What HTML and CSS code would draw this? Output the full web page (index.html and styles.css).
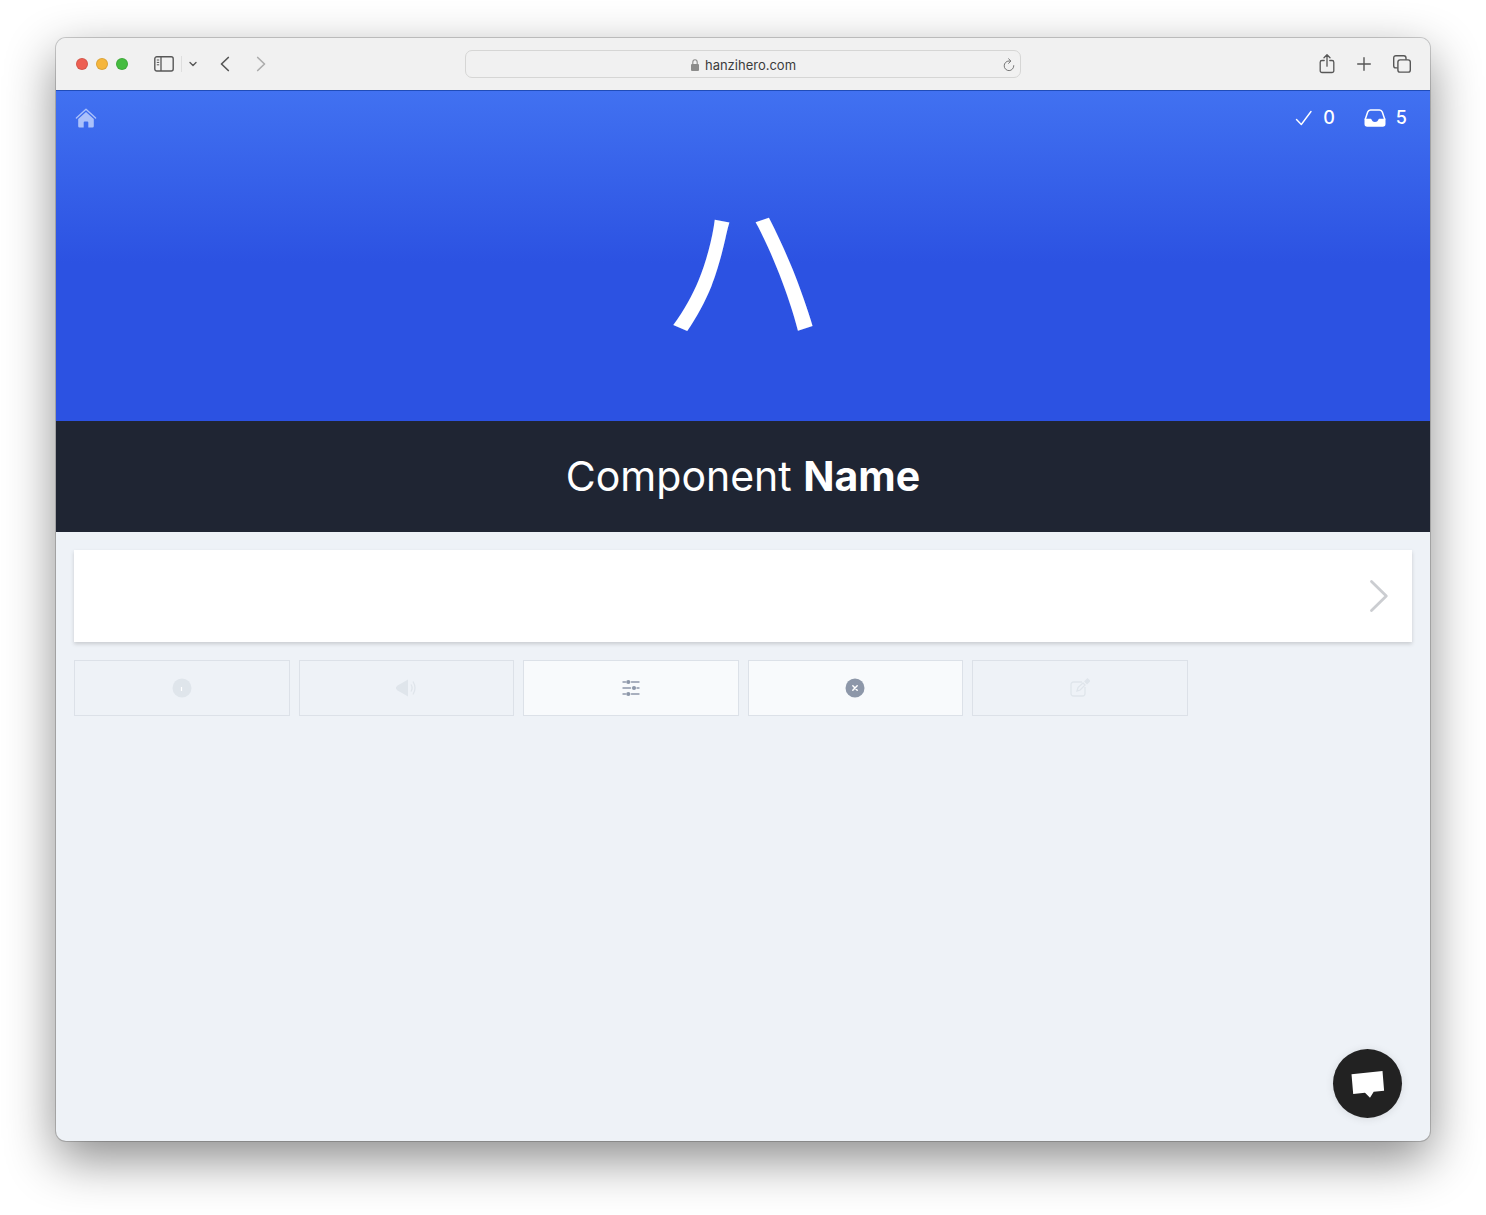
FILE: index.html
```html
<!DOCTYPE html>
<html lang="en">

<head>
    <meta charset="UTF-8">
    <meta name="viewport" content="width=device-width, initial-scale=1.0">
    <title>HanziHero</title>
    <link rel="stylesheet" href="styles.css">
</head>

<body>
    <div class="window">
        <div class="toolbar">
            <div class="toolbar-left">
                <div class="lights">
                    <span class="light red"></span>
                    <span class="light yellow"></span>
                    <span class="light green"></span>
                </div>
                <button class="tool sidebar" type="button" aria-label="Sidebar">
                    <svg width="20" height="16" viewBox="0 0 20 16" fill="none" stroke="currentColor">
                        <rect x="0.8" y="0.8" width="18.4" height="14.2" rx="2" stroke-width="1.4" />
                        <path d="M7 1v14" stroke-width="1.3" />
                        <path d="M2.8 4h2.4M2.8 6.4h2.4M2.8 8.8h2.4" />
                    </svg>
                </button>
                <button class="tool menu" type="button" aria-label="Tab groups">
                    <svg width="8" height="6" viewBox="0 0 8 6" fill="none" stroke="currentColor" stroke-width="1.4" stroke-linecap="round" stroke-linejoin="round"><path d="M1 1.5l3 3 3-3" /></svg>
                </button>
                <button class="tool back" type="button" aria-label="Back">
                    <svg width="10" height="16" viewBox="0 0 10 16" fill="none" stroke="currentColor" stroke-width="1.7" stroke-linecap="round" stroke-linejoin="round"><path d="M8.3 1.5L1.5 8l6.8 6.5" /></svg>
                </button>
                <button class="tool forward" type="button" aria-label="Forward">
                    <svg width="10" height="16" viewBox="0 0 10 16" fill="none" stroke="currentColor" stroke-width="1.7" stroke-linecap="round" stroke-linejoin="round"><path d="M1.7 1.5L8.5 8l-6.8 6.5" /></svg>
                </button>
            </div>
            <div class="address">
                <span class="url">
                    <svg width="8" height="12" viewBox="0 0 8 12">
                        <path d="M1.8 6V3.2a2.2 2.4 0 0 1 4.4 0V6" fill="none" stroke="#8c8c8b" stroke-width="1.1" />
                        <rect y="5" width="8" height="7" rx="1" fill="#8c8c8b" />
                    </svg>
                    hanzihero.com
                </span>
                <button class="tool reload" type="button" aria-label="Reload">
                    <svg width="12" height="14" viewBox="0 0 12 14" fill="none" stroke="currentColor" stroke-linecap="round" stroke-linejoin="round"><path d="M10.8 7.6A4.8 4.8 0 1 1 6 3h1.6M5.6 0.8L7.9 3 5.6 5.4" /></svg>
                </button>
            </div>
            <div class="toolbar-right">
                <button class="tool" type="button" aria-label="Share">
                    <svg width="16" height="20" viewBox="0 0 16 20" fill="none" stroke="currentColor" stroke-width="1.3" stroke-linecap="round" stroke-linejoin="round"><path d="M5.2 6.500H3a1.800 1.800 0 0 0-1.800 1.800v8.400A1.800 1.800 0 0 0 3 18.500h10a1.800 1.800 0 0 0 1.800-1.800V8.300A1.800 1.800 0 0 0 13 6.500h-2.200M8 12.200V0.900M5 3.700l3-3 3 3" /></svg>
                </button>
                <button class="tool" type="button" aria-label="New tab">
                    <svg width="14" height="14" viewBox="0 0 14 14" fill="none" stroke="currentColor" stroke-width="1.4" stroke-linecap="round"><path d="M7 0.700v12.600M0.700 7h12.600" /></svg>
                </button>
                <button class="tool" type="button" aria-label="Tab overview">
                    <svg width="18" height="18" viewBox="0 0 18 18" fill="none" stroke="currentColor" stroke-width="1.4"><rect x="4.900" y="4.900" width="12.400" height="12.200" rx="2.200" /><path d="M4.700 12.900H2.900A2.200 2.200 0 0 1 0.700 10.700V2.900A2.200 2.200 0 0 1 2.900 0.700h7.900A2.200 2.200 0 0 1 13 2.900v1.800" /></svg>
                </button>
            </div>
        </div>

        <header class="hero">
            <nav class="nav">
                <a class="home" href="#" aria-label="Home">
                    <svg width="22" height="20" viewBox="0 0 22 20">
                        <path d="M1.400 10L11 1.300 20.600 10" fill="none" stroke="currentColor" stroke-width="1.400" stroke-linecap="round" stroke-linejoin="round" />
                        <path d="M11 4l7.800 7v7.200a1.300 1.300 0 0 1-1.300 1.300h-4.200v-5a1 1 0 0 0-1-1H9.700a1 1 0 0 0-1 1v5H4.500a1.300 1.300 0 0 1-1.300-1.300V11z" fill="currentColor" />
                    </svg>
                </a>
                <div class="stats">
                    <span class="stat">
                        <svg width="18" height="16" viewBox="0 0 18 16" fill="none" stroke="currentColor" stroke-width="1.400" stroke-linecap="round" stroke-linejoin="round"><path d="M1.500 9.500l4.800 5L16 1.500" /></svg>
                        0
                    </span>
                    <span class="stat">
                        <svg width="22" height="18" viewBox="0 0 22 18">
                            <path d="M1.200 10.500L3.700 3A3 3 0 0 1 6.500 1h9a3 3 0 0 1 2.800 2l2.500 7.500" fill="none" stroke="currentColor" stroke-width="1.500" />
                            <path d="M0.500 9.800h5.700c.8 0 1.300.5 1.600 1.200.5 1.200 1.500 2 3.200 2s2.700-.8 3.200-2c.3-.7.8-1.200 1.600-1.200h5.700v5.200a2.800 2.800 0 0 1-2.800 2.800H3.300A2.800 2.800 0 0 1 .5 15z" fill="currentColor" />
                        </svg>
                        5
                    </span>
                </div>
            </nav>
            <div class="character" lang="ja">ハ</div>
        </header>

        <h1 class="question">Component <b>Name</b></h1>

        <main class="quiz">
            <form class="answer">
                <input class="answer-input" type="text" aria-label="Component name" autocomplete="off">
                <button class="submit" type="submit" aria-label="Submit">
                    <svg width="20" height="34" viewBox="0 0 20 34" fill="none" stroke="currentColor" stroke-width="2.800" stroke-linecap="round" stroke-linejoin="round"><path d="M2.500 2.500L17.300 17 2.500 31.500" /></svg>
                </button>
            </form>

            <div class="actions">
                <button class="action" type="button" aria-label="Info" disabled>
                    <svg width="20" height="20" viewBox="0 0 20 20"><circle cx="10" cy="10" r="9.500" fill="currentColor" /><path d="M9.500 9v4" stroke="#fff" stroke-width="1.200" /></svg>
                </button>
                <button class="action" type="button" aria-label="Play audio" disabled>
                    <svg width="20" height="20" viewBox="0 0 20 20"><path d="M12 1.500v17L6 15 1.500 12.500 0 10.800V9.200L1.500 7.500 6 5z" fill="currentColor" /><path d="M15 6.500q2.200 3.500 0 7M17 3.500q4 6.500 0 13" fill="none" stroke="currentColor" stroke-width="1.300" /></svg>
                </button>
                <button class="action" type="button" aria-label="Options">
                    <svg width="20" height="20" viewBox="0 0 20 20" stroke="currentColor" stroke-width="1.400" stroke-linecap="round"><path d="M2 4h2.500M10.500 4H18M2 10h7.500M16 10h2M2 16h2.500M10.500 16H18" /><g fill="currentColor" stroke="none"><circle cx="7.300" cy="4" r="2.100" /><circle cx="13" cy="10" r="2.100" /><circle cx="7.300" cy="16" r="2.100" /></g></svg>
                </button>
                <button class="action" type="button" aria-label="Skip">
                    <svg width="20" height="20" viewBox="0 0 20 20"><circle cx="10" cy="10" r="9.500" fill="currentColor" /><path d="M7.800 7.800l4.400 4.400M12.200 7.800l-4.400 4.400" stroke="#fff" stroke-width="1.500" stroke-linecap="round" /></svg>
                </button>
                <button class="action" type="button" aria-label="Edit" disabled>
                    <svg width="20" height="20" viewBox="0 0 20 20" fill="none" stroke="currentColor" stroke-width="1.300"><path d="M12 4H3.500A2.500 2.500 0 0 0 1 6.500v9A2.500 2.500 0 0 0 3.500 18h9a2.500 2.500 0 0 0 2.500-2.500V9M7 13l1-3.500 5-4.500 2 2-4.800 5z" /><path d="M15 3.500L17.500 1 19.500 3 17 5.500z" fill="currentColor" /></svg>
                </button>
            </div>
        </main>

        <button class="chat" type="button" aria-label="Open chat">
            <svg width="34" height="28" viewBox="0 0 34 28" fill="#fff"><path d="M0.500 4.200L31.500 1l1.600 19.700-10.400 1L19 27.800l-5-5L2.200 24z" /></svg>
        </button>
    </div>
</body>

</html>
```
FILE: styles.css
```css
* {
    margin: 0;
    padding: 0;
    box-sizing: border-box;
}

body {
    min-height: 100vh;
    display: flex;
    padding: 38px 56px 74px;
    background: #fff;
    font-family: Inter, "Liberation Sans", sans-serif;
}

button {
    border: none;
    background: none;
    cursor: pointer;
}

svg {
    display: block;
}

.window {
    position: relative;
    flex: 1;
    display: flex;
    flex-direction: column;
    border-radius: 10px;
    background: #eef2f7;
    box-shadow: 0 0 0 1px rgba(0, 0, 0, 0.18), 0 18px 50px rgba(0, 0, 0, 0.46);
}

/* browser toolbar */
.toolbar {
    display: grid;
    grid-template-columns: 1fr 40.5% 1fr;
    align-items: center;
    height: 53px;
    border-bottom: 1px solid #204cb8;
    border-radius: 10px 10px 0 0;
    background: #f1f1f1;
}

.toolbar-left,
.toolbar-right,
.lights {
    display: flex;
    align-items: center;
}

.toolbar-left {
    padding-left: 20px;
}

.toolbar-right {
    justify-content: flex-end;
    gap: 22px;
    padding-right: 19px;
}

.lights {
    gap: 8px;
}

.light {
    width: 12px;
    height: 12px;
    border-radius: 50%;
    border: 1px solid rgba(0, 0, 0, 0.1);
}

.red {
    background: #ed5f52;
}

.yellow {
    background: #f5b63c;
}

.green {
    background: #45bc40;
}

.tool {
    color: #575757;
}

.sidebar {
    margin-left: 26px;
}

.menu {
    margin-left: 7px;
    padding: 5px 0 5px 7px;
    border-left: 1px solid #dedede;
}

.back {
    margin-left: 23px;
}

.forward {
    margin-left: 26px;
    color: #adadad;
}

.address {
    display: flex;
    align-items: center;
    height: 28px;
    padding: 2px 5px 0 18px;
    border: 1px solid #d6d6d5;
    border-radius: 7px;
    font-size: 13px;
    color: #3c3c3c;
}

.url {
    flex: 1;
    display: flex;
    align-items: center;
    justify-content: center;
    gap: 6px;
}

.reload {
    color: #777;
}

/* character banner */
.hero {
    height: 330px;
    background: linear-gradient(#4171f1, #2c52e2 52%);
    color: #fff;
}

.nav {
    display: flex;
    align-items: center;
    justify-content: space-between;
    height: 53px;
    padding: 0 23px 0 19px;
}

.home {
    color: #abc1fa;
}

.stats {
    display: flex;
    gap: 29px;
}

.stat {
    display: flex;
    align-items: center;
    gap: 10px;
    font-size: 18px;
    font-weight: 500;
}

.character {
    font-family: "Noto Sans CJK JP", sans-serif;
    font-size: 164px;
    line-height: 234px;
    text-align: center;
}

.question {
    padding: 30px;
    background: #1f2533;
    color: #fff;
    font-size: 41px;
    font-weight: 400;
    line-height: 51px;
    text-align: center;
}

.question b {
    font-weight: 700;
}

/* answer form */
.quiz {
    display: flex;
    flex-direction: column;
    gap: 18px;
    padding: 18px;
}

.answer {
    display: flex;
    height: 92px;
    background: #fff;
    box-shadow: 0 2px 4px rgba(0, 0, 0, 0.16);
}

.answer-input {
    flex: 1;
    min-width: 0;
    padding: 0 24px;
    border: none;
    outline: none;
    background: none;
    font-family: inherit;
    font-size: 36px;
}

.submit {
    padding: 0 23px;
    color: #cbcdd1;
}

.actions {
    display: grid;
    grid-template-columns: repeat(6, 1fr);
    gap: 9px;
}

.action {
    display: flex;
    align-items: center;
    justify-content: center;
    height: 56px;
    border: 1px solid #dce1e8;
    background: #f8fafc;
    color: #8d97a9;
}

.action:disabled {
    background: none;
    color: #dfe5eb;
    cursor: default;
}

.chat {
    position: absolute;
    right: 28px;
    bottom: 23px;
    display: flex;
    align-items: center;
    justify-content: center;
    width: 69px;
    height: 69px;
    border-radius: 50%;
    background: #222;
    box-shadow: 0 1px 8px rgba(0, 0, 0, 0.1);
}
```
